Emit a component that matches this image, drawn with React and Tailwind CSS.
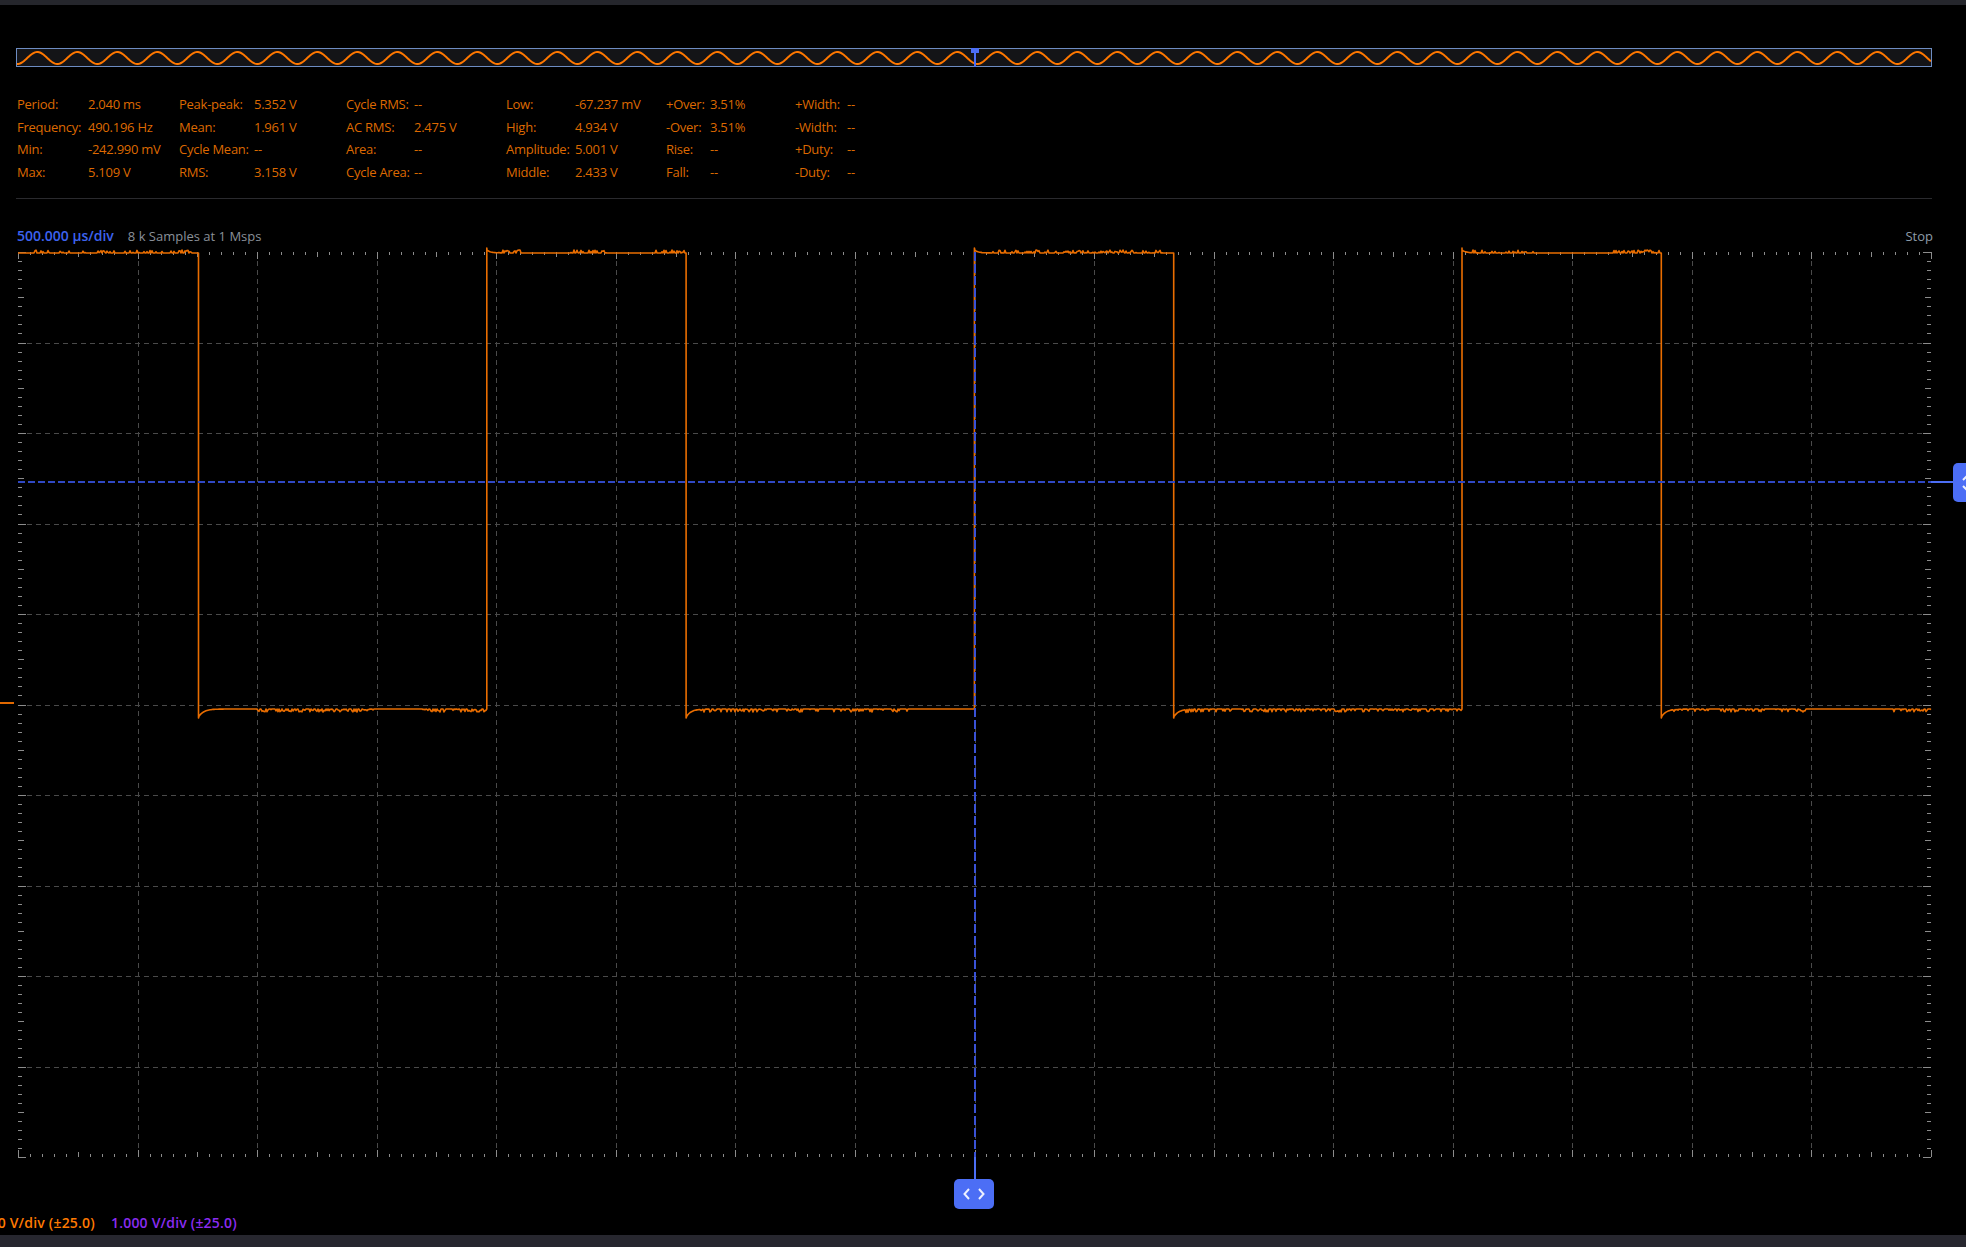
import React from 'react';

const X0 = 18, X1 = 1931, Y0 = 252, Y1 = 1157;
const DX = (X1 - X0) / 16, DY = (Y1 - Y0) / 10;

function makeRng(seed) {
  let s = seed >>> 0;
  return () => {
    s = (Math.imul(s, 1664525) + 1013904223) >>> 0;
    return s / 4294967296;
  };
}

const c = (v) => Math.round(v) + 0.5;

function buildGrid() {
  let v = '';
  for (let k = 1; k < 16; k++) {
    const x = c(X0 + k * DX);
    v += `M${x} ${Y0}V${Y1}`;
  }
  let h = '';
  for (let j = 1; j < 10; j++) {
    const y = c(Y0 + j * DY);
    h += `M${X0} ${y}H${X1}`;
  }
  let t = '';
  for (let i = 0; i <= 160; i++) {
    const x = c(X0 + (i * DX) / 10);
    const len = i % 10 === 0 ? 7 : i % 5 === 0 ? 5 : 3;
    t += `M${x} ${Y0}v${len}M${x} ${Y1}v${-len}`;
  }
  for (let i = 0; i <= 100; i++) {
    const y = c(Y0 + (i * DY) / 10);
    const len = i % 10 === 0 ? 8 : i % 5 === 0 ? 6 : 4;
    t += `M${X0} ${y}h${len}M${X1} ${y}h${-len}`;
  }
  return { v, h, t };
}

function buildWave() {
  const P = 487.6, HD = 199.3, R0 = 974.4;
  const HY = 253, LY = 709;
  const rnd = makeRng(12345);
  const edges = [];
  for (let k = -3; k <= 3; k++) {
    edges.push({ x: R0 + k * P, t: 'r' });
    edges.push({ x: R0 + k * P + HD, t: 'f' });
  }
  const ev = edges.filter((e) => e.x > X0 && e.x < X1).sort((a, b) => a.x - b.x);
  const stateAt = (x) => {
    const p = (((x - R0) % P) + P) % P;
    return p < HD ? 'H' : 'L';
  };
  let state = stateAt(X0);
  let lastEdge = -1000;
  let ei = 0;
  let d = `M${X0} ${HY}`;
  let noiseProb = 0.4;
  for (let x = X0 + 1; x <= X1; x++) {
    while (ei < ev.length && ev[ei].x <= x) {
      const e = ev[ei];
      if (e.t === 'f') {
        d += `L${e.x.toFixed(1)} ${HY}L${e.x.toFixed(1)} 718`;
        state = 'L';
      } else {
        d += `L${e.x.toFixed(1)} ${LY}L${e.x.toFixed(1)} 248`;
        state = 'H';
      }
      lastEdge = e.x;
      ei++;
    }
    if (rnd() < 0.03) noiseProb = rnd() < 0.25 ? 0 : 0.25 + rnd() * 0.4;
    const tt = x - lastEdge;
    let y;
    if (state === 'L') {
      y = LY + 8 * Math.exp(-tt / 5);
      if (tt > 12 && rnd() < noiseProb) y += rnd() * 3;
    } else {
      y = HY - 3 * Math.exp(-tt / 4);
      if (tt > 8 && rnd() < noiseProb) y -= rnd() * 3;
    }
    d += `L${x} ${y.toFixed(1)}`;
  }
  return d;
}

function buildSine() {
  let d = '';
  for (let x = 17; x <= 1931; x++) {
    const y = 58 - 6 * Math.cos((2 * Math.PI * (x - 37.3)) / 40);
    d += (x === 17 ? 'M' : 'L') + x + ' ' + y.toFixed(2);
  }
  return d;
}

const GRID = buildGrid();
const WAVE = buildWave();
const SINE = buildSine();

const COLS = [
  {
    w: 'w-[162px]', lw: 'w-[71px]',
    rows: [['Period:', '2.040 ms'], ['Frequency:', '490.196 Hz'], ['Min:', '-242.990 mV'], ['Max:', '5.109 V']],
  },
  {
    w: 'w-[167px]', lw: 'w-[75px]',
    rows: [['Peak-peak:', '5.352 V'], ['Mean:', '1.961 V'], ['Cycle Mean:', '--'], ['RMS:', '3.158 V']],
  },
  {
    w: 'w-[160px]', lw: 'w-[68px]',
    rows: [['Cycle RMS:', '--'], ['AC RMS:', '2.475 V'], ['Area:', '--'], ['Cycle Area:', '--']],
  },
  {
    w: 'w-[160px]', lw: 'w-[69px]',
    rows: [['Low:', '-67.237 mV'], ['High:', '4.934 V'], ['Amplitude:', '5.001 V'], ['Middle:', '2.433 V']],
  },
  {
    w: 'w-[129px]', lw: 'w-[44px]',
    rows: [['+Over:', '3.51%'], ['-Over:', '3.51%'], ['Rise:', '--'], ['Fall:', '--']],
  },
  {
    w: 'w-[100px]', lw: 'w-[52px]',
    rows: [['+Width:', '--'], ['-Width:', '--'], ['+Duty:', '--'], ['-Duty:', '--']],
  },
];

export default function App() {
  return (
    <div className="w-[1966px] h-[1247px] bg-black overflow-hidden flex flex-col font-['Open_Sans',sans-serif]">
      <div className="h-[5px] shrink-0 bg-[#25262c]" />

      {/* overview strip */}
      <div className="mt-[43px] ml-[16px] w-[1916px] h-[19px] shrink-0">
        <svg width="1916" height="19" viewBox="16 48 1916 19" className="block">
          <defs>
            <clipPath id="ovclip">
              <rect x="17" y="49" width="1914" height="17" />
            </clipPath>
          </defs>
          <rect x="16.5" y="48.5" width="1915" height="18" fill="#141417" stroke="#6d8cc2" strokeWidth="1" />
          <path d={SINE} fill="none" stroke="#ff7800" strokeWidth="2" clipPath="url(#ovclip)" />
          <rect x="971" y="48" width="8" height="5" fill="#4c6ef5" />
          <rect x="974" y="48" width="2" height="19" fill="#4c6ef5" />
        </svg>
      </div>

      {/* measurements */}
      <div className="mt-[26px] ml-[17px] flex shrink-0 text-[13px] leading-[22.5px] tracking-[-0.25px] text-[#dd6900]">
        {COLS.map((col, i) => (
          <div key={i} className={`${col.w} flex flex-col`}>
            {col.rows.map(([l, v]) => (
              <div key={l} className="flex whitespace-nowrap h-[22.5px]">
                <span className={`${col.lw} shrink-0`}>{l}</span>
                <span>{v}</span>
              </div>
            ))}
          </div>
        ))}
      </div>

      <div className="mt-[15px] ml-[16px] w-[1916px] h-px shrink-0 bg-[#2a2a2e]" />

      {/* header */}
      <div className="mt-[28px] h-[18px] shrink-0 flex items-center justify-between pl-[17px] pr-[33px] leading-[18px]">
        <div className="flex items-center gap-[14px]">
          <span className="text-[14px] font-semibold text-[#3d63ee]">500.000 µs/div</span>
          <span className="text-[13px] text-[#8a9099]">8 k Samples at 1 Msps</span>
        </div>
        <span className="text-[13px] text-[#8d9caa]">Stop</span>
      </div>

      {/* plot */}
      <div className="relative h-[934px] shrink-0">
        <svg width="1966" height="934" viewBox="0 245 1966 934" className="block">
          <path d={GRID.v} stroke="#4a4a4a" strokeWidth="1" strokeDasharray="5 4" fill="none" shapeRendering="crispEdges" />
          <path d={GRID.h} stroke="#4a4a4a" strokeWidth="1" strokeDasharray="5 4" fill="none" shapeRendering="crispEdges" />
          <path d={GRID.t} stroke="#8c8c8c" strokeWidth="1" fill="none" shapeRendering="crispEdges" />
          <line x1="0" y1="703" x2="14" y2="703" stroke="#e06800" strokeWidth="2" />
          <path d={WAVE} fill="none" stroke="#e96d00" strokeWidth="1.6" strokeLinejoin="round" />
          <line x1={X0} y1="482" x2={X1} y2="482" stroke="#3048c4" strokeWidth="2" strokeDasharray="7 3" />
          <line x1={X1} y1="482" x2="1960" y2="482" stroke="#4c6ef5" strokeWidth="2" />
          <line x1="975" y1={Y0} x2="975" y2={Y1} stroke="#3a52d6" strokeWidth="2" strokeDasharray="9 3" />
          <line x1="975" y1={Y1} x2="975" y2="1180" stroke="#4c6ef5" strokeWidth="2" />
        </svg>
        <div className="absolute top-[218px] left-[1953px] w-[30px] h-[39px] rounded-[5px] bg-[#4c6ef5] flex items-center justify-center">
          <svg width="14" height="22" viewBox="0 0 14 22">
            <path d="M2 8 L7 3 L12 8 M2 14 L7 19 L12 14" stroke="#eef1ff" strokeWidth="2" fill="none" />
          </svg>
        </div>
      </div>

      {/* horizontal position button */}
      <div className="h-[30px] shrink-0 pl-[954px]">
        <div className="w-[40px] h-[30px] rounded-[5px] bg-[#4c6ef5] flex items-center justify-center">
          <svg width="24" height="14" viewBox="0 0 24 14">
            <path d="M7 2 L2.5 7 L7 12 M17 2 L21.5 7 L17 12" stroke="#eef1ff" strokeWidth="2" fill="none" />
          </svg>
        </div>
      </div>

      {/* channel labels */}
      <div className="mt-[5px] h-[18px] shrink-0 flex items-center gap-[16px] ml-[-31px] text-[14px] leading-[18px] font-semibold tracking-[0.2px] whitespace-nowrap">
        <span className="text-[#ff7a00]">1.000 V/div (±25.0)</span>
        <span className="text-[#8a2cf0]">1.000 V/div (±25.0)</span>
      </div>

      <div className="mt-[3px] h-[12px] shrink-0 bg-[#27272f]" />
    </div>
  );
}
